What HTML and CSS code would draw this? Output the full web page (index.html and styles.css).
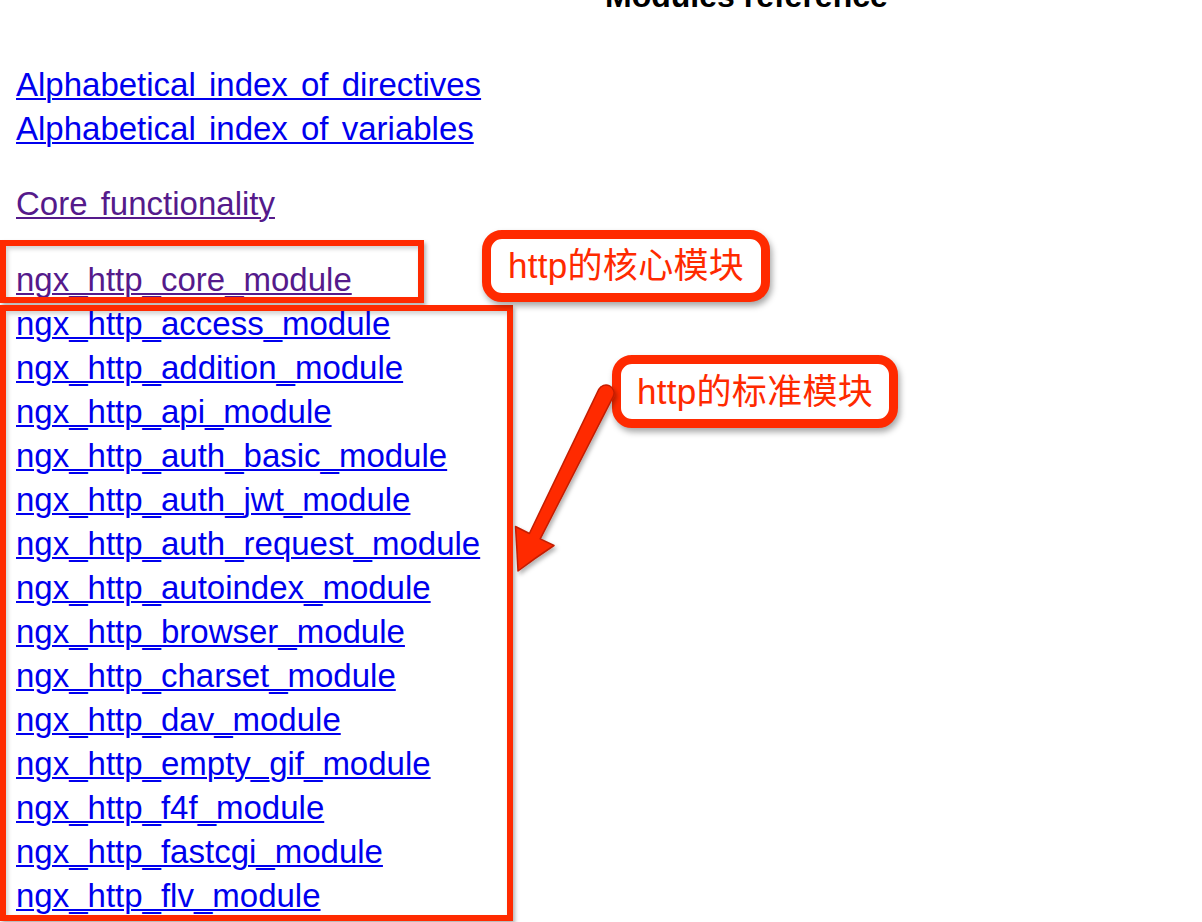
FILE: index.html
```html
<!DOCTYPE html>
<html lang="en">
<head>
<meta charset="utf-8">
<title>Modules reference</title>
<link rel="stylesheet" href="styles.css">
</head>
<body>
<main class="page">
  <h1 class="title">Modules reference</h1>
  <div class="group group-index">
    <a class="link" href="#">Alphabetical index of directives</a>
    <a class="link" href="#">Alphabetical index of variables</a>
  </div>
  <div class="group group-core">
    <a class="link visited" href="#">Core functionality</a>
  </div>
  <div class="group group-http">
    <a class="link visited" href="#">ngx_http_core_module</a>
    <a class="link" href="#">ngx_http_access_module</a>
    <a class="link" href="#">ngx_http_addition_module</a>
    <a class="link" href="#">ngx_http_api_module</a>
    <a class="link" href="#">ngx_http_auth_basic_module</a>
    <a class="link" href="#">ngx_http_auth_jwt_module</a>
    <a class="link" href="#">ngx_http_auth_request_module</a>
    <a class="link" href="#">ngx_http_autoindex_module</a>
    <a class="link" href="#">ngx_http_browser_module</a>
    <a class="link" href="#">ngx_http_charset_module</a>
    <a class="link" href="#">ngx_http_dav_module</a>
    <a class="link" href="#">ngx_http_empty_gif_module</a>
    <a class="link" href="#">ngx_http_f4f_module</a>
    <a class="link" href="#">ngx_http_fastcgi_module</a>
    <a class="link" href="#">ngx_http_flv_module</a>
  </div>
</main>

<div class="mark mark-core"></div>
<div class="mark mark-std"></div>
<div class="callout callout-core">http的核心模块</div>
<div class="callout callout-std">http的标准模块</div>
<svg class="arrow" width="1202" height="922" viewBox="0 0 1202 922" xmlns="http://www.w3.org/2000/svg">
  <defs>
    <filter id="sh" x="-20%" y="-20%" width="140%" height="140%">
      <feDropShadow dx="2" dy="3" stdDeviation="2" flood-color="#000" flood-opacity="0.3"/>
    </filter>
  </defs>
  <g filter="url(#sh)">
    <path d="M598.8 389.4 L529.4 533.5 L515.5 526.5 Q517 550 518 571 Q535 558 554 545.5 L540.2 538.9 L613.2 396.6 A8 8 0 0 0 598.8 389.4 Z" fill="#ff2a00" stroke="#c41d00" stroke-width="1.5" stroke-linejoin="round"/>
  </g>
</svg>
</body>
</html>
```

FILE: styles.css
```css
html {
  overflow: hidden;
}

body {
  margin: 0;
  background: #ffffff;
  font-family: "Liberation Sans", Arial, sans-serif;
}

.page {
  padding-left: 16px;
}

.title {
  margin: -20px 0 0 0;
  padding-left: 589px;
  font-size: 32px;
  line-height: 32px;
  font-weight: bold;
  color: #000;
}

.group {
  display: flex;
  flex-direction: column;
  align-items: flex-start;
}

.group-index {
  margin-top: 51px;
}

.group-core {
  margin-top: 31px;
}

.group-http {
  margin-top: 32px;
}

.link {
  display: block;
  font-size: 33px;
  line-height: 44px;
  word-spacing: 4px;
  color: #0000ee;
  text-decoration: underline;
  text-decoration-thickness: 2px;
  text-underline-offset: 2px;
}

.link.visited {
  color: #551a8b;
}

/* annotation overlays */
.mark {
  position: absolute;
  box-sizing: border-box;
  border: 6px solid #ff2a00;
  box-shadow: 2px 3px 4px rgba(0, 0, 0, 0.3), inset 2px 3px 4px rgba(0, 0, 0, 0.18);
}

.mark-core {
  left: 0;
  top: 240px;
  width: 424px;
  height: 63px;
}

.mark-std {
  left: 0;
  top: 305px;
  width: 513px;
  height: 616px;
}

.callout {
  position: absolute;
  box-sizing: border-box;
  display: flex;
  align-items: center;
  justify-content: center;
  background: #fff;
  border: 9px solid #ff2a00;
  border-radius: 20px;
  box-shadow: 2px 4px 6px rgba(0, 0, 0, 0.35);
  color: #ff2a00;
  font-family: "Liberation Sans", "Noto Sans CJK SC", sans-serif;
  font-size: 35px;
  line-height: 40px;
  letter-spacing: 0.3px;
  white-space: nowrap;
}

.callout-core {
  left: 482px;
  top: 230px;
  width: 288px;
  height: 72px;
}

.callout-std {
  left: 612px;
  top: 355px;
  width: 286px;
  height: 73px;
}

.arrow {
  position: absolute;
  left: 0;
  top: 0;
  pointer-events: none;
}
```
